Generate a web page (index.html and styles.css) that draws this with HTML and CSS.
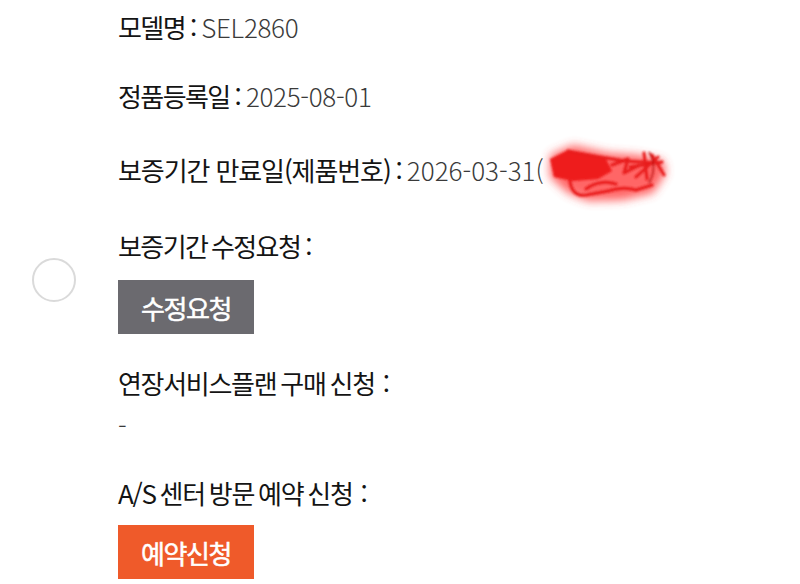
FILE: index.html
```html
<!DOCTYPE html>
<html lang="ko">
<head>
<meta charset="utf-8">
<link rel="stylesheet" href="styles.css">
</head>
<body>
<div class="page">
  <div class="row r1"><span class="label">모델명</span><span class="colon">:</span><span class="value">SEL2860</span></div>
  <div class="row r2"><span class="label">정품등록일</span><span class="colon">:</span><span class="value">2025-08-01</span></div>
  <div class="row r3"><span class="label">보증기간 만료일(제품번호)</span><span class="colon">:</span><span class="value">2026-03-31(</span><span class="redact"><svg width="160" height="80" viewBox="0 0 160 80"><defs><filter id="halo" x="-30%" y="-50%" width="160%" height="200%"><feGaussianBlur stdDeviation="5"/></filter><filter id="soft" x="-10%" y="-20%" width="120%" height="140%"><feGaussianBlur stdDeviation="0.8"/></filter></defs><path filter="url(#halo)" fill="#ff4040" opacity="0.8" d="M22 20 L45 10 L80 18 L110 20 L135 25 L138 38 L125 58 L95 65 L60 66 L40 58 L22 42 Z"/><g filter="url(#soft)"><path fill="#ee1a1a" d="M22 24 L40 15 L62 19 L78 24 L84 36 L70 44 L45 46 L26 42 Z"/><g fill="none" stroke="#e81c1c" stroke-width="3" stroke-linecap="round" stroke-linejoin="round"><path d="M40 16 C55 20 75 22 95 26 L132 28"/><path d="M84 30 L100 24 L96 38 L112 30"/><path d="M102 32 L134 27"/><path d="M116 18 L119 44"/><path d="M108 42 L130 22"/><path d="M124 20 L136 40"/><path d="M42 46 Q44 62 58 60 L80 56 Q95 51 108 55 L124 50"/><path d="M58 54 Q72 44 88 49"/></g><path fill="none" stroke="#c01818" stroke-width="1.6" d="M121 17 Q130 32 121 48"/></g></svg></span></div>
  <div class="row r4"><span class="label">보증기간 수정요청</span><span class="colon">:</span></div>
  <button class="btn btn-gray">수정요청</button>
  <div class="row r5"><span class="label">연장서비스플랜 구매 신청</span><span class="colon">:</span></div>
  <div class="row dash"><span class="value">-</span></div>
  <div class="row r6"><span class="label">A/S 센터 방문 예약 신청</span><span class="colon">:</span></div>
  <button class="btn btn-orange">예약신청</button>
</div>
<div class="circle"></div>
</body>
</html>
```

FILE: styles.css
```css
html, body {
  margin: 0;
  padding: 0;
  background: #ffffff;
}
body {
  font-family: "Noto Sans CJK KR", "Noto Sans", sans-serif;
  width: 800px;
  height: 584px;
  overflow: hidden;
  position: relative;
}
.page {
  padding: 10px 0 0 118px;
  display: flex;
  flex-direction: column;
  align-items: flex-start;
}
.row {
  font-size: 26px;
  line-height: 34px;
  height: 34px;
  white-space: nowrap;
  display: flex;
  align-items: center;
}
.label {
  color: #141414;
  letter-spacing: -1.6px;
  word-spacing: -2px;
}
.r3 .label {
  letter-spacing: -1.1px;
  word-spacing: 0;
}
.r5 .label,
.r6 .label {
  letter-spacing: -1.3px;
}
.colon {
  color: #141414;
  margin: 0 4px 0 5px;
}
.r5 .colon,
.r6 .colon {
  margin-left: 8px;
}
.value {
  color: #3a3a3a;
  font-weight: 300;
  letter-spacing: -0.3px;
}
.r3 .value {
  letter-spacing: 0;
}
.redact {
  display: inline-block;
  width: 130px;
  height: 34px;
  position: relative;
}
.redact svg {
  position: absolute;
  left: -16px;
  top: -18px;
}
.r2 { margin-top: 35px; }
.r3 { margin-top: 40px; }
.r4 { margin-top: 42px; }
.r5 { margin-top: 32px; }
.dash { margin-top: 8px; }
.r6 { margin-top: 34px; }
.btn {
  width: 136px;
  height: 54px;
  border: none;
  padding: 0;
  color: #ffffff;
  font-family: "Noto Sans CJK KR", "Noto Sans", sans-serif;
  font-size: 26px;
  font-weight: 400;
  letter-spacing: -1.4px;
  -webkit-text-stroke: 0.5px #ffffff;
}
.btn-gray {
  background: #6b6a6f;
  margin-top: 17px;
}
.btn-orange {
  background: #ef5a2a;
  margin-top: 15px;
}
.circle {
  position: absolute;
  left: 32px;
  top: 258px;
  width: 40px;
  height: 40px;
  border: 2px solid #dadada;
  border-radius: 50%;
}
```
